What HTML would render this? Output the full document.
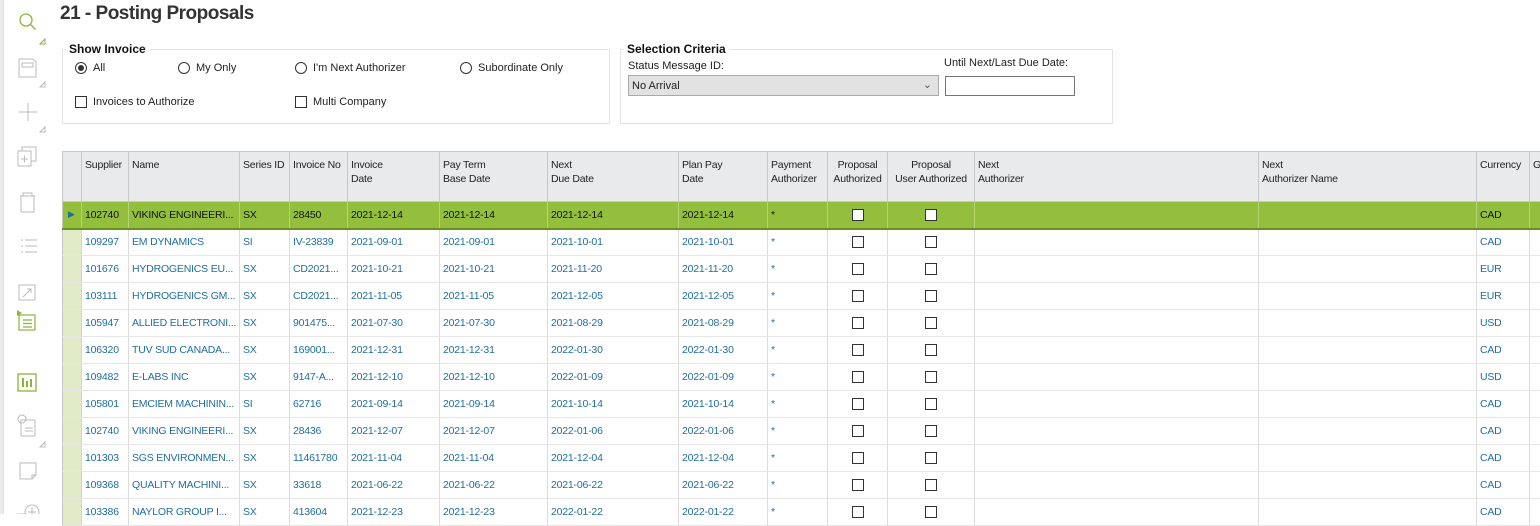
<!DOCTYPE html>
<html><head><meta charset="utf-8"><style>
*{box-sizing:border-box;margin:0;padding:0}
body{width:1540px;height:514px;overflow:hidden;background:#fff;font-family:"Liberation Sans",sans-serif;font-size:11px;color:#222;position:relative}
.abs{position:absolute}
.strip{left:0;top:0;width:4px;height:514px;background:#ececec;border-right:1px solid #ddd}
h1{position:absolute;left:60px;top:3px;font-size:19px;font-weight:bold;color:#333;letter-spacing:-0.5px}
.fs{position:absolute;border:1px solid #e4e4e4}
.lg{position:absolute;background:#fff;font-weight:bold;font-size:12px;color:#111;padding:0 3px}
.radio{position:absolute;width:12px;height:12px;border:1px solid #333;border-radius:50%;background:#fff}
.radio.on::after{content:"";position:absolute;left:2px;top:2px;width:6px;height:6px;border-radius:50%;background:#333}
.cb{position:absolute;width:12px;height:12px;border:1px solid #333;background:#fff}
.lbl{position:absolute;font-size:11px;color:#222}
table{position:absolute;left:62px;top:151px;width:1497px;border-collapse:collapse;table-layout:fixed;border-top:1px solid #c8c8c8;border-left:1px solid #c8c8c8;font-size:10.5px;letter-spacing:-0.2px}
td,th{border-right:1px solid #dcdcdc;border-bottom:1px solid #e6e6e6;white-space:nowrap;overflow:hidden;text-overflow:clip;padding:0 3px;height:27px;font-weight:normal;text-align:left;color:#1f6e9e}
th{height:50px;background:#e9eaec;color:#222;vertical-align:top;padding-top:6px;line-height:14px;border-right:1px solid #c8c8c8;border-bottom:1px solid #c8c8c8}
th.c{text-align:center}
td.ind{background:#e1ebc8;border-right:1px solid #cfdcb0;padding:0}
tr.sel td{background:#93bf3c;color:#111;border-bottom:2px solid #6b8f25;border-right-color:#b5d47a}
tr.sel td.ind{background:#93bf3c;color:#1f6e9e;font-size:9px;padding-left:5px}
.bx{display:inline-block;width:12px;height:12px;border:1px solid #333;background:#fff;vertical-align:middle}
td.c{text-align:center}
</style></head><body>
<div class="abs strip"></div>
<svg class="abs" style="left:0;top:0" width="62" height="514">
<g fill="none" stroke="#8cb43a" stroke-width="1.3"><circle cx="26" cy="20" r="6"/><path d="M30.5 24.5l5 5"/></g>
<path d="M40 44l5-5v5z" fill="none" stroke="#8cb43a"/>
<g fill="none" stroke="#bbb" stroke-width="1">
<path d="M19 59h14l3 3v15H19z"/><rect x="22" y="63" width="11" height="4"/>
<path d="M40 87l5-5v5z"/>
<path d="M19 112h18M28 103v18"/><path d="M40 132l5-5v5z"/>
<rect x="18" y="151" width="13" height="15"/><path d="M22 151v-4h14v14h-5M21 159h7M24.5 155.5v7"/>
<path d="M21 196h13v16H21zM20 196h15M23 196v-3h9v3"/>
<path d="M21 240h2M25 240h12M21 246h2M25 246h12M21 252h2M25 252h12"/>
<rect x="19" y="285" width="16" height="15"/><path d="M23 297l8-8M27 289h4v4"/>
<rect x="21" y="420" width="14" height="16"/><circle cx="22" cy="419" r="4"/><path d="M25 428h8M25 431h8"/>
<path d="M40 447l5-5v5z"/>
<path d="M20 463h16v12l-4 4H20z M32 479v-4h4"/>
<circle cx="32" cy="512" r="7"/><path d="M32 508v8M28 512h8M17 514h10"/>
</g>
<g fill="none" stroke="#8cb43a" stroke-width="1.2"><rect x="19" y="315" width="16" height="15"/><path d="M23 320h9M23 323.5h9M23 327h9"/></g>
<path d="M17 310l5 3-5 3z" fill="#8cb43a"/>
<g fill="none" stroke="#8cb43a" stroke-width="1.3"><rect x="18" y="374" width="18" height="17"/></g>
<path d="M22 378h2v9h-2zM26 381h2v6h-2zM30 379h2v8h-2z" fill="#8cb43a"/>
</svg>
<h1>21 - Posting Proposals</h1>

<div class="fs" style="left:62px;top:49px;width:548px;height:75px"></div>
<div class="lg" style="left:66px;top:42px">Show Invoice</div>
<div class="radio on" style="left:75px;top:62px"></div><div class="lbl" style="left:93px;top:62px">All</div>
<div class="radio" style="left:178px;top:62px"></div><div class="lbl" style="left:196px;top:62px">My Only</div>
<div class="radio" style="left:295px;top:62px"></div><div class="lbl" style="left:313px;top:62px">I'm Next Authorizer</div>
<div class="radio" style="left:460px;top:62px"></div><div class="lbl" style="left:478px;top:62px">Subordinate Only</div>
<div class="cb" style="left:75px;top:96px"></div><div class="lbl" style="left:93px;top:96px">Invoices to Authorize</div>
<div class="cb" style="left:295px;top:96px"></div><div class="lbl" style="left:313px;top:96px">Multi Company</div>

<div class="fs" style="left:620px;top:49px;width:493px;height:75px"></div>
<div class="lg" style="left:624px;top:42px">Selection Criteria</div>
<div class="lbl" style="left:628px;top:60px">Status Message ID:</div>
<div class="abs" style="left:628px;top:75px;width:311px;height:21px;background:#e2e2e2;border:1px solid #aaa;padding:4px 3px;font-size:11px">No Arrival<span style="position:absolute;right:6px;top:2px;color:#555">&#8964;</span></div>
<div class="lbl" style="left:944px;top:57px">Until Next/Last Due Date:</div>
<div class="abs" style="left:945px;top:76px;width:130px;height:20px;border:1px solid #777"></div>

<table>
<colgroup><col style="width:19px"><col style="width:47px"><col style="width:111px"><col style="width:50px"><col style="width:58px"><col style="width:92px"><col style="width:108px"><col style="width:131px"><col style="width:89px"><col style="width:60px"><col style="width:60px"><col style="width:87px"><col style="width:284px"><col style="width:218px"><col style="width:53px"><col style="width:30px"></colgroup>
<tr><th></th><th>Supplier</th><th>Name</th><th>Series ID</th><th>Invoice No</th><th>Invoice<br>Date</th><th>Pay Term<br>Base Date</th><th>Next<br>Due Date</th><th>Plan Pay<br>Date</th><th>Payment<br>Authorizer</th><th class="c">Proposal<br>Authorized</th><th class="c">Proposal<br>User Authorized</th><th>Next<br>Authorizer</th><th>Next<br>Authorizer Name</th><th>Currency</th><th>G</th></tr>
<tr class="sel"><td class="ind">&#9654;</td><td>102740</td><td>VIKING ENGINEERI...</td><td>SX</td><td>28450</td><td>2021-12-14</td><td>2021-12-14</td><td>2021-12-14</td><td>2021-12-14</td><td>*</td><td class="c"><span class="bx"></span></td><td class="c"><span class="bx"></span></td><td></td><td></td><td>CAD</td><td></td></tr>
<tr><td class="ind"></td><td>109297</td><td>EM DYNAMICS</td><td>SI</td><td>IV-23839</td><td>2021-09-01</td><td>2021-09-01</td><td>2021-10-01</td><td>2021-10-01</td><td>*</td><td class="c"><span class="bx"></span></td><td class="c"><span class="bx"></span></td><td></td><td></td><td>CAD</td><td></td></tr>
<tr><td class="ind"></td><td>101676</td><td>HYDROGENICS EU...</td><td>SX</td><td>CD2021...</td><td>2021-10-21</td><td>2021-10-21</td><td>2021-11-20</td><td>2021-11-20</td><td>*</td><td class="c"><span class="bx"></span></td><td class="c"><span class="bx"></span></td><td></td><td></td><td>EUR</td><td></td></tr>
<tr><td class="ind"></td><td>103111</td><td>HYDROGENICS GM...</td><td>SX</td><td>CD2021...</td><td>2021-11-05</td><td>2021-11-05</td><td>2021-12-05</td><td>2021-12-05</td><td>*</td><td class="c"><span class="bx"></span></td><td class="c"><span class="bx"></span></td><td></td><td></td><td>EUR</td><td></td></tr>
<tr><td class="ind"></td><td>105947</td><td>ALLIED ELECTRONI...</td><td>SX</td><td>901475...</td><td>2021-07-30</td><td>2021-07-30</td><td>2021-08-29</td><td>2021-08-29</td><td>*</td><td class="c"><span class="bx"></span></td><td class="c"><span class="bx"></span></td><td></td><td></td><td>USD</td><td></td></tr>
<tr><td class="ind"></td><td>106320</td><td>TUV SUD CANADA...</td><td>SX</td><td>169001...</td><td>2021-12-31</td><td>2021-12-31</td><td>2022-01-30</td><td>2022-01-30</td><td>*</td><td class="c"><span class="bx"></span></td><td class="c"><span class="bx"></span></td><td></td><td></td><td>CAD</td><td></td></tr>
<tr><td class="ind"></td><td>109482</td><td>E-LABS INC</td><td>SX</td><td>9147-A...</td><td>2021-12-10</td><td>2021-12-10</td><td>2022-01-09</td><td>2022-01-09</td><td>*</td><td class="c"><span class="bx"></span></td><td class="c"><span class="bx"></span></td><td></td><td></td><td>USD</td><td></td></tr>
<tr><td class="ind"></td><td>105801</td><td>EMCIEM MACHININ...</td><td>SI</td><td>62716</td><td>2021-09-14</td><td>2021-09-14</td><td>2021-10-14</td><td>2021-10-14</td><td>*</td><td class="c"><span class="bx"></span></td><td class="c"><span class="bx"></span></td><td></td><td></td><td>CAD</td><td></td></tr>
<tr><td class="ind"></td><td>102740</td><td>VIKING ENGINEERI...</td><td>SX</td><td>28436</td><td>2021-12-07</td><td>2021-12-07</td><td>2022-01-06</td><td>2022-01-06</td><td>*</td><td class="c"><span class="bx"></span></td><td class="c"><span class="bx"></span></td><td></td><td></td><td>CAD</td><td></td></tr>
<tr><td class="ind"></td><td>101303</td><td>SGS ENVIRONMEN...</td><td>SX</td><td>11461780</td><td>2021-11-04</td><td>2021-11-04</td><td>2021-12-04</td><td>2021-12-04</td><td>*</td><td class="c"><span class="bx"></span></td><td class="c"><span class="bx"></span></td><td></td><td></td><td>CAD</td><td></td></tr>
<tr><td class="ind"></td><td>109368</td><td>QUALITY MACHINI...</td><td>SX</td><td>33618</td><td>2021-06-22</td><td>2021-06-22</td><td>2021-06-22</td><td>2021-06-22</td><td>*</td><td class="c"><span class="bx"></span></td><td class="c"><span class="bx"></span></td><td></td><td></td><td>CAD</td><td></td></tr>
<tr><td class="ind"></td><td>103386</td><td>NAYLOR GROUP I...</td><td>SX</td><td>413604</td><td>2021-12-23</td><td>2021-12-23</td><td>2022-01-22</td><td>2022-01-22</td><td>*</td><td class="c"><span class="bx"></span></td><td class="c"><span class="bx"></span></td><td></td><td></td><td>CAD</td><td></td></tr>
</table>
</body></html>
